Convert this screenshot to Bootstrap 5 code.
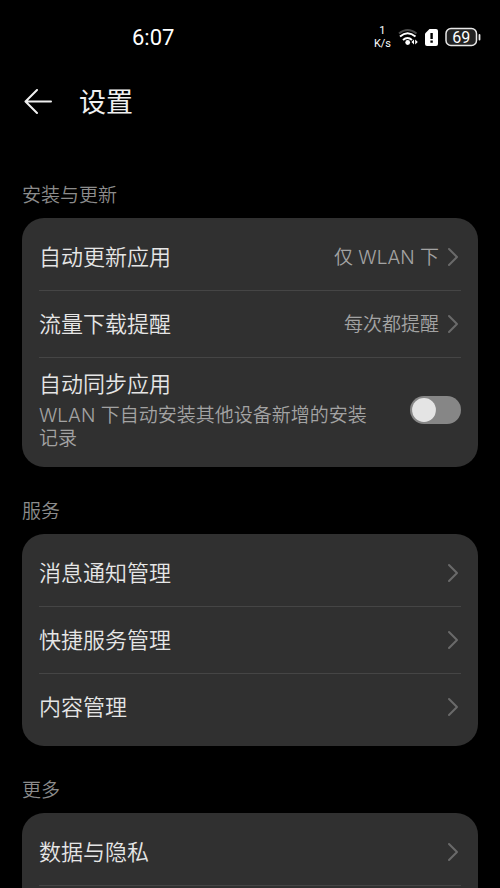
<!DOCTYPE html>
<html lang="zh-CN" data-bs-theme="dark">
<head>
<meta charset="utf-8">
<meta name="viewport" content="width=device-width, initial-scale=1">
<title>设置</title>
<link href="https://cdn.jsdelivr.net/npm/bootstrap@5.3.0/dist/css/bootstrap.min.css" rel="stylesheet">
<style>
  body { background: #000; color: #e6e6e6; font-family: Inter, "Noto Sans CJK SC", sans-serif; font-weight: 350; }
  .screen { padding: 0 22px; }
  .status-bar { height: 74px; color: #fff; padding-left: 110px; margin-right: -3px; }
  .clock { font: 400 22px/28px Roboto, sans-serif; padding-top: 2px; }
  .speed { font: 400 11px/13px Roboto, sans-serif; }
  .status-icons { gap: 7px; }
  .title-bar { height: 56px; gap: 26px; }
  .title-bar h1 { font-size: 27px; line-height: 36px; font-weight: 400; color: #f0f0f0; padding-top: 2px; }
  .back { line-height: 0; padding: 0; margin-left: 2px; color: #f0f0f0; }
  .group-label { font-size: 19px; line-height: 28px; font-weight: 350; color: #8c8c8c; padding: 31px 0 8px; }
  .title-bar + .group-label { padding-top: 52px; }
  .group { background: #303030; border-radius: 22px; padding: 6px 17px; --bs-list-group-bg: transparent; }
  .group-open { border-radius: 22px 22px 0 0; }
  .entry { min-height: 67px; font-size: 22px; line-height: 28px; color: #e6e6e6; text-decoration: none; border-bottom: 1px solid #454545; }
  .entry:hover { color: #fff; }
  .group:not(.group-open) .entry:last-child { border-bottom: 0; min-height: 66px; }
  .group .entry-tall:last-child { padding: 12px 0 11px; gap: 36px; }
  .choice { font-size: 19px; color: #a3a3a3; }
  .choice .entry-text { padding-top: 1px; }
  .note { font-size: 19px; line-height: 23px; color: #a3a3a3; padding-top: 6px; }
  .toggle .form-check-input { width: 51px; height: 28px; border: 0; background-color: #868686; }
  .toggle .form-check-input:not(:checked) {
    background-image: url("data:image/svg+xml,%3csvg xmlns='http://www.w3.org/2000/svg' viewBox='-4 -4 8 8'%3e%3ccircle r='3.4' fill='%23e4e4e4'/%3e%3c/svg%3e"); }
  .chevron { width: 14px; height: 20px; fill: none; stroke: #6a6a6a; stroke-width: 2; stroke-linecap: round; stroke-linejoin: round; }
</style>
</head>
<body>
<svg class="d-none" aria-hidden="true"><symbol id="chevron" viewBox="0 0 14 20"><path d="M2 2L10 10L2 18"/></symbol></svg>
<div class="screen d-flex flex-column vh-100 overflow-hidden">
  <div class="status-bar d-flex align-items-center justify-content-between flex-shrink-0">
    <span class="clock">6:07</span>
    <div class="status-icons d-flex align-items-center">
      <div class="speed text-center"><div>1</div><div>K/s</div></div>
      <svg width="20" height="18" viewBox="0 0 20 18" fill="none" stroke="#fff" stroke-width="2" aria-hidden="true">
        <path d="M1 5.500Q9.500-1.500 18.500 5.500" stroke="#4a4a4a"/>
        <path d="M2 8.500Q9.500 2 17.500 8.500M5 12Q9.500 8 14 12"/>
        <circle cx="9.700" cy="14.500" r="2.400" fill="#fff" stroke="none"/>
        <path d="M16 11.500L13.400 14L16 16.500ZM17.200 11.500L19.800 14L17.200 16.500Z" fill="#fff" stroke="none"/>
      </svg>
      <svg width="13" height="17" viewBox="0 0 13 17" aria-hidden="true">
        <path d="M4.500 0H11a2 2 0 0 1 2 2v13a2 2 0 0 1-2 2H2a2 2 0 0 1-2-2V4.500Z" fill="#fff"/>
        <path d="M5.400 4h2.400v6H5.400zM5.400 11.500h2.400v2.200H5.400z" fill="#000"/>
      </svg>
      <svg width="36" height="20" viewBox="0 0 36 20" role="img" aria-label="69%">
        <rect x="1" y="1.500" width="30.500" height="17" rx="5" fill="#222" stroke="#e8e8e8" stroke-width="1.500"/>
        <path d="M34.500 8v4.500" stroke="#e8e8e8" stroke-width="1.800" stroke-linecap="round"/>
        <text x="16.200" y="15.500" text-anchor="middle" font-family="Roboto, sans-serif" font-size="16" font-weight="400" fill="#fff">69</text>
      </svg>
    </div>
  </div>

  <header class="title-bar d-flex align-items-center flex-shrink-0">
    <button type="button" class="btn back border-0" aria-label="返回">
      <svg width="29" height="26" viewBox="0 0 29 26" fill="none" stroke="currentColor" stroke-width="2" stroke-linecap="round" stroke-linejoin="round"><path d="M27 12.500H2M13 1L1.500 12.500L13 24"/></svg>
    </button>
    <h1 class="m-0">设置</h1>
  </header>

  <h2 class="group-label m-0">安装与更新</h2>
  <div class="group list-group flex-shrink-0">
    <a href="#" class="entry d-flex align-items-center justify-content-between">
      <span class="entry-text">自动更新应用</span>
      <span class="choice d-flex align-items-center gap-2"><span class="entry-text">仅 WLAN 下</span><svg class="chevron"><use href="#chevron"/></svg></span></a>
    <a href="#" class="entry d-flex align-items-center justify-content-between">
      <span class="entry-text">流量下载提醒</span>
      <span class="choice d-flex align-items-center gap-2"><span class="entry-text">每次都提醒</span><svg class="chevron"><use href="#chevron"/></svg></span></a>
    <div class="entry entry-tall d-flex align-items-center justify-content-between">
      <label class="entry-text" for="sync">自动同步应用<span class="note d-block">WLAN 下自动安装其他设备新增的安装记录</span></label>
      <div class="toggle form-check form-switch p-0 m-0 d-flex flex-shrink-0">
        <input class="form-check-input m-0" type="checkbox" role="switch" id="sync">
      </div>
    </div>
  </div>

  <h2 class="group-label m-0">服务</h2>
  <div class="group list-group flex-shrink-0">
    <a href="#" class="entry d-flex align-items-center justify-content-between"><span class="entry-text">消息通知管理</span><svg class="chevron"><use href="#chevron"/></svg></a>
    <a href="#" class="entry d-flex align-items-center justify-content-between"><span class="entry-text">快捷服务管理</span><svg class="chevron"><use href="#chevron"/></svg></a>
    <a href="#" class="entry d-flex align-items-center justify-content-between"><span class="entry-text">内容管理</span><svg class="chevron"><use href="#chevron"/></svg></a>
  </div>

  <h2 class="group-label m-0">更多</h2>
  <div class="group group-open list-group flex-grow-1 flex-shrink-0">
    <a href="#" class="entry d-flex align-items-center justify-content-between"><span class="entry-text">数据与隐私</span><svg class="chevron"><use href="#chevron"/></svg></a>
  </div>
</div>
<script src="https://cdn.jsdelivr.net/npm/bootstrap@5.3.0/dist/js/bootstrap.bundle.min.js"></script>
</body>
</html>
